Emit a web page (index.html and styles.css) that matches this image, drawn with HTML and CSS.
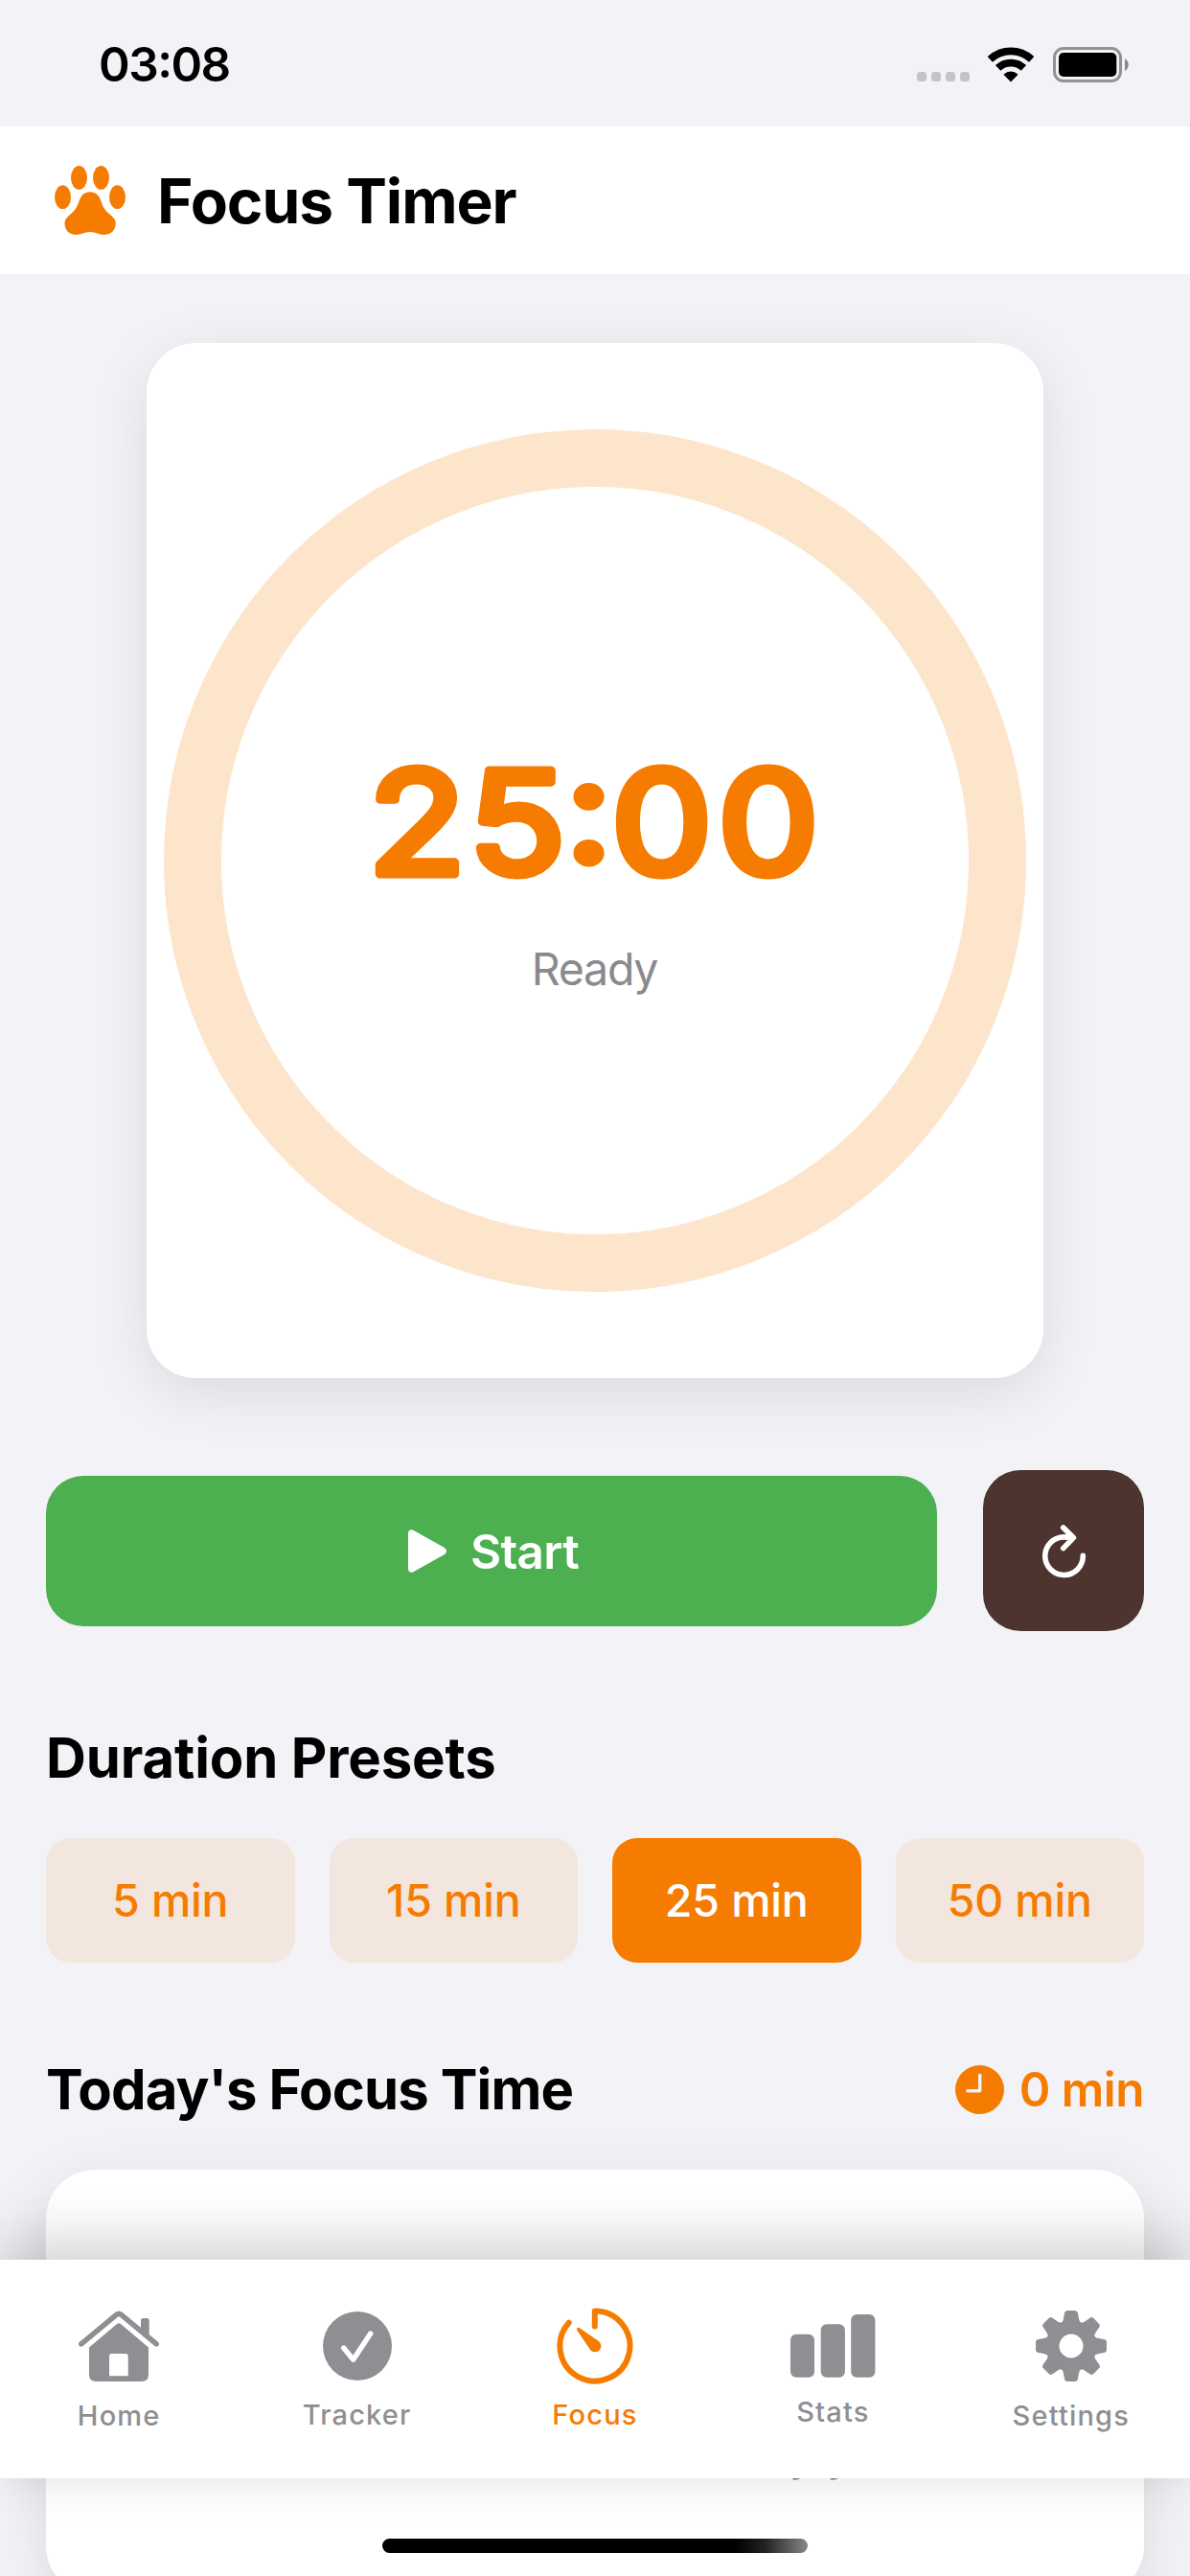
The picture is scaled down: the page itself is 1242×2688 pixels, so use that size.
FILE: index.html
```
<!DOCTYPE html>
<html lang="en">
<head>
<meta charset="utf-8">
<title>Focus Timer</title>
<link rel="stylesheet" href="styles.css">
</head>
<body>
<div class="screen">
  <div class="status-bar">
    <span class="status-time">03<span class="colon">:</span>08</span>
    <div class="status-icons">
      <svg class="signal" width="55" height="10" viewBox="0 0 55 10"><rect width="10" height="10" rx="3.6"/><rect x="15" width="10" height="10" rx="3.6"/><rect x="30" width="10" height="10" rx="3.6"/><rect x="45" width="10" height="10" rx="3.6"/></svg>
      <svg class="wifi" width="48" height="37" viewBox="0 0 48 37"><g fill="none" stroke="#000" stroke-width="7.8"><path d="M2.3 12.9A31.8 31.8 0 0 1 45.7 12.9"/><path d="M10.6 21.9A19.4 19.4 0 0 1 37.4 21.9"/></g><path d="M24 35.5L17.4 28.8A10 10 0 0 1 30.6 28.8Z" stroke="#000" stroke-width="1.4" stroke-linejoin="round"/></svg>
      <svg class="battery" width="80" height="37" viewBox="0 0 80 37"><rect x="1.5" y="1.5" width="69" height="34" rx="9.5" fill="none" stroke="#929296" stroke-width="3"/><rect x="6" y="6" width="60.3" height="25" rx="5"/><path d="M75 12.3a7.2 7.2 0 0 1 0 12.6z" fill="#88888c"/></svg>
    </div>
  </div>

  <header class="header">
    <svg class="paw" width="74" height="72" viewBox="0 0 74 72"><ellipse cx="8.5" cy="32.7" rx="8.5" ry="12.4"/><ellipse cx="25.5" cy="12.4" rx="8.5" ry="12.4"/><ellipse cx="48.5" cy="12.4" rx="8.5" ry="12.4"/><ellipse cx="65.5" cy="32.7" rx="8.5" ry="12.4"/><path d="M37 27.3C43 27.3 46.500 31 48.500 37C51 45 54 47.500 58 51C61.500 54 63.800 56.500 63.800 60C63.800 67 59 72 51.500 72C46 72 43 69 37 69C31 69 28 72 22.500 72C15 72 10.500 67 10.500 60C10.500 56.500 12.500 54 16 51C20 47.500 23 45 25.500 37C27.500 31 31 27.300 37 27.300Z"/></svg>
    <h1 class="header-title">Focus Timer</h1>
  </header>

  <main class="content">
    <section class="timer-card">
      <svg class="ring" width="900" height="900" viewBox="0 0 900 900">
        <circle cx="450" cy="450" r="420"/>
        <text class="ring-time" transform="scale(1.12 1)" x="190.5 284 374.6 417 516.4" y="464.2 464.2 451.5 464.2 464.2">25:00</text>
        <text class="ring-state" x="449.500" y="580">Ready</text>
      </svg>
    </section>

    <div class="controls">
      <button class="start">
        <svg width="40" height="45" viewBox="0 0 40 45"><path d="M0 4C0 .5 3-.8 5.800 1.100L37.500 18.800C40.700 20.800 40.700 24.200 37.500 26.200L5.800 43.900C3 45.800 0 44.500 0 41Z"/></svg>
        <span>Start</span>
      </button>
      <button class="reset" aria-label="Reset">
        <svg width="47" height="57" viewBox="0 0 47 57"><path d="M43.300 33.300A19.800 19.800 0 1 1 23.500 13.900Q27 13.900 31 14.500M22.700 3.900L33.400 14.600L22.700 25.600"/></svg>
      </button>
    </div>

    <h2 class="section-title">Duration Presets</h2>
    <div class="presets">
      <button class="preset">5 min</button>
      <button class="preset">15 min</button>
      <button class="preset preset-active">25 min</button>
      <button class="preset">50 min</button>
    </div>

    <div class="today">
      <h2 class="today-title">Today's Focus Time</h2>
      <div class="total">
        <svg width="51" height="51" viewBox="0 0 51 51"><circle cx="25.500" cy="25.500" r="25.500" fill="#f57c00"/><path d="M25.700 10.500V26.800H12.800" fill="none" stroke="#f2f2f7" stroke-width="3.400" stroke-linecap="round" stroke-linejoin="round"/></svg>
        <span>0 min</span>
      </div>
    </div>
    <section class="sessions"><p class="empty">No focus sessions today yet</p></section>
  </main>

  <nav class="tab-bar">
    <a class="tab">
      <span class="tab-icon"><svg width="84" height="74" viewBox="0 0 84 74"><path d="M2.800 34.900L39.800 4.200Q42 2.400 44.200 4.200L81.200 34.900" fill="none" stroke="currentColor" stroke-width="5.500" stroke-linecap="round"/><path d="M65 24V10.500Q65 8 67.500 8H71.200Q73.700 8 73.700 10.500V30Z"/><path fill-rule="evenodd" d="M11 38.400L40 14Q42 12.300 44 14L73 38.400V67Q73 74 66 74H18Q11 74 11 67ZM32 68.300H51.700V47.500Q51.700 45 49.200 45H34.500Q32 45 32 47.500Z"/></svg></span>
      <span class="tab-label label-low">Home</span>
    </a>
    <a class="tab">
      <span class="tab-icon"><svg width="72" height="72" viewBox="0 0 72 72"><circle cx="36" cy="36" r="36"/><path d="M21.700 38L31.700 50.200L49.700 23" fill="none" stroke="#fff" stroke-width="5.400" stroke-linecap="round" stroke-linejoin="round"/></svg></span>
      <span class="tab-label">Tracker</span>
    </a>
    <a class="tab tab-active">
      <span class="tab-icon"><svg width="80" height="80" viewBox="0 0 80 80"><path d="M39.800 19.500V3.500A36.500 36.500 0 1 1 12.700 15.700" fill="none" stroke="currentColor" stroke-width="6" stroke-linecap="round" stroke-linejoin="round"/><path d="M24 21.300L43.900 35.100A6.300 6.300 0 1 1 35.100 44L21.400 23.800C20.200 21.600 22 20 24 21.300Z"/></svg></span>
      <span class="tab-label">Focus</span>
    </a>
    <a class="tab">
      <span class="tab-icon"><svg width="89" height="66" viewBox="0 0 89 66"><rect y="20.700" width="25" height="45" rx="6"/><rect x="31.700" y="10.300" width="25.200" height="55.400" rx="6"/><rect x="63.200" width="25.200" height="65.700" rx="6"/></svg></span>
      <span class="tab-label label-high">Stats</span>
    </a>
    <a class="tab">
      <span class="tab-icon"><svg width="74" height="74" viewBox="-37 -37 74 74"><defs><path id="tooth" d="M-10.500 -24C-8.500 -25-8 -28-7 -34.500Q-6.500 -37-4 -37H4Q6.500 -37 7 -34.500C8 -28 8.500 -25 10.500 -24Z"/></defs><circle r="19.500" fill="none" stroke="currentColor" stroke-width="14"/><use href="#tooth"/><use href="#tooth" transform="rotate(45)"/><use href="#tooth" transform="rotate(90)"/><use href="#tooth" transform="rotate(135)"/><use href="#tooth" transform="rotate(180)"/><use href="#tooth" transform="rotate(225)"/><use href="#tooth" transform="rotate(270)"/><use href="#tooth" transform="rotate(315)"/></svg></span>
      <span class="tab-label label-low">Settings</span>
    </a>
  </nav>
  <div class="home-indicator"></div>
</div>
</body>
</html>
```
FILE: styles.css
```
* {
  box-sizing: border-box;
}

body {
  margin: 0;
  background: #f2f2f7;
  color: #000;
  font-family: Inter, "Liberation Sans", sans-serif;
}

h1, h2, p {
  margin: 0;
}

svg {
  display: block;
  flex: none;
}

button {
  border: 0;
  padding: 0;
  font-family: inherit;
}

.screen {
  position: relative;
  width: 1242px;
  height: 2688px;
  overflow: hidden;
}

/* Status bar */
.status-bar {
  display: flex;
  justify-content: space-between;
  height: 132px;
  padding: 37px 63px 0 103px;
}

.status-time {
  font-size: 49.5px;
  font-weight: 600;
  line-height: 60px;
  letter-spacing: -1.5px;
}

.colon {
  line-height: 1;
  vertical-align: 4px;
}

.status-icons {
  display: flex;
  height: 49px;
  align-items: flex-end;
}

.signal {
  margin: 0 19px 1px 0;
  fill: #c4c3c9;
}

.wifi {
  margin-right: 20px;
}

/* Header */
.header {
  display: flex;
  align-items: center;
  gap: 33px;
  height: 154px;
  padding: 0 57px;
  background: #fff;
}

.paw {
  fill: #f57c00;
}

.header-title {
  margin-top: 2px;
  font-size: 64px;
  font-weight: 700;
  line-height: 80px;
  letter-spacing: -1.05px;
}

/* Timer */
.content {
  display: flex;
  flex-direction: column;
  padding: 72px 48px 0;
}

.timer-card {
  display: flex;
  align-items: center;
  justify-content: center;
  align-self: center;
  width: 936px;
  height: 1080px;
  border-radius: 51px;
  background: #fff;
  box-shadow: 0 15px 60px rgba(0, 0, 0, 0.1);
}

.ring circle {
  fill: none;
  stroke: #fde5cc;
  stroke-width: 60px;
}

.ring-time {
  fill: #f57c00;
  stroke: #f57c00;
  stroke-width: 9px;
  stroke-linejoin: round;
  font-size: 149px;
  font-weight: 400;
}

.ring-state {
  fill: #8a8a8e;
  font-size: 46.5px;
  letter-spacing: -1.25px;
  text-anchor: middle;
}

/* Controls */
.controls {
  display: flex;
  align-items: center;
  gap: 48px;
  height: 168px;
  margin-top: 96px;
}

.start {
  display: flex;
  flex: 1;
  align-items: center;
  justify-content: center;
  gap: 25px;
  height: 157px;
  padding: 1px 0 0 4px;
  border-radius: 39px;
  background: #4caf50;
  color: #fff;
  fill: #fff;
  font-size: 49.5px;
  font-weight: 600;
  letter-spacing: -0.7px;
}

.reset {
  display: flex;
  align-items: center;
  justify-content: center;
  width: 168px;
  height: 168px;
  border-radius: 39px;
  background: #4e342e;
}

.reset path {
  fill: none;
  stroke: #fff;
  stroke-width: 5.6px;
  stroke-linecap: round;
  stroke-linejoin: round;
}

/* Presets */
.section-title,
.today-title {
  font-size: 58px;
  font-weight: 700;
  line-height: 72px;
}

.section-title {
  margin-top: 96px;
  letter-spacing: -0.12px;
}

.today-title {
  letter-spacing: -0.86px;
}

.presets {
  display: grid;
  grid-template-columns: repeat(4, 1fr);
  gap: 36px;
  margin-top: 48px;
}

.preset {
  height: 130px;
  border-radius: 26px;
  background: #f2e6de;
  color: #f57c00;
  font-size: 46.5px;
  font-weight: 500;
  letter-spacing: -0.15px;
}

.preset-active {
  background: #f57c00;
  color: #fff;
}

/* Today's sessions */
.today {
  display: flex;
  align-items: center;
  justify-content: space-between;
  margin-top: 96px;
}

.total {
  display: flex;
  align-items: center;
  gap: 16px;
  color: #f57c00;
  font-size: 49.5px;
  font-weight: 600;
  line-height: 60px;
  letter-spacing: -0.55px;
}

.sessions {
  display: flex;
  align-items: flex-end;
  justify-content: center;
  height: 444px;
  margin-top: 48px;
  padding-bottom: 117px;
  border-radius: 51px;
  background: #fff;
  box-shadow: 0 15px 60px rgba(0, 0, 0, 0.1);
}

.empty {
  color: #8a8a8e;
  font-size: 46.5px;
  line-height: 60px;
}

.tab-bar {
  position: absolute;
  left: 0;
  bottom: 102px;
  display: grid;
  grid-template-columns: repeat(5, 1fr);
  width: 100%;
  height: 228px;
  padding-top: 45px;
  background: #fff;
  box-shadow: 0 -15px 60px rgba(0, 0, 0, 0.2);
}

.tab {
  display: flex;
  flex-direction: column;
  align-items: center;
  color: #8e8e93;
  fill: currentColor;
}

.tab-active {
  color: #f57c00;
}

.tab-icon {
  display: flex;
  align-items: center;
  height: 90px;
}

.tab-label {
  margin-top: 9px;
  font-size: 29px;
  font-weight: 500;
  line-height: 36px;
  letter-spacing: 1.2px;
}

.label-low {
  margin-top: 10px;
}

.label-high {
  margin-top: 6px;
}

.home-indicator {
  position: absolute;
  left: 399px;
  bottom: 24px;
  width: 444px;
  height: 15px;
  border-radius: 8px;
  background: linear-gradient(90deg, #000 83%, #222 90%, #888 100%);
}
```
